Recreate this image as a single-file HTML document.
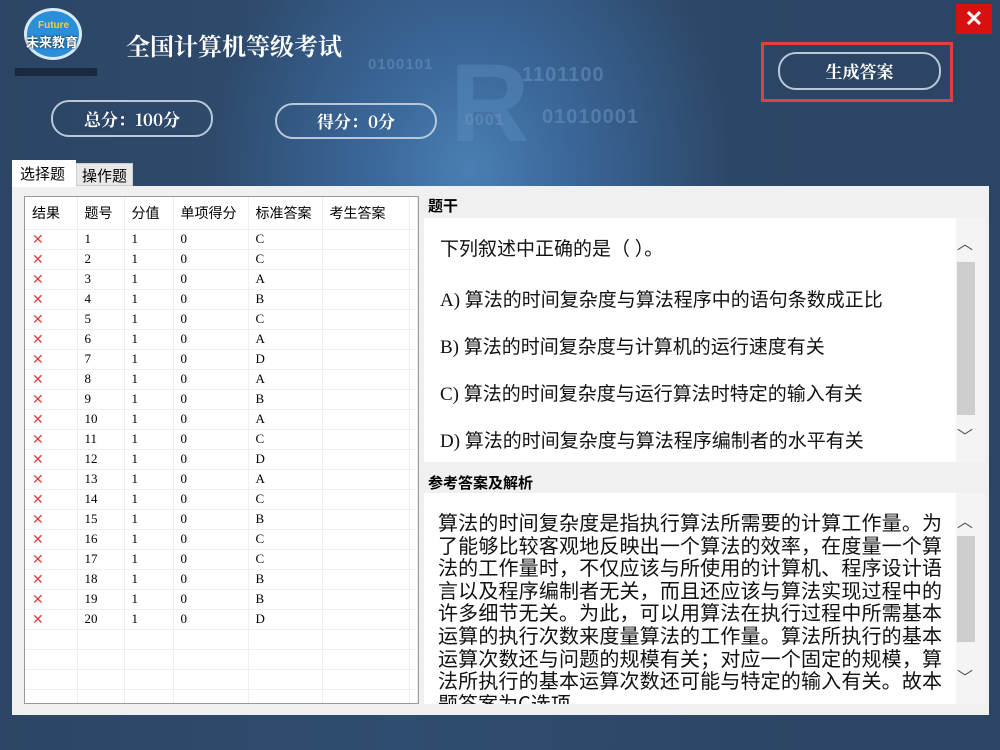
<!DOCTYPE html>
<html><head><meta charset="utf-8"><style>
*{margin:0;padding:0;box-sizing:border-box}
body{width:1000px;height:750px;overflow:hidden;position:relative;font-family:"Liberation Sans","Noto Sans CJK SC","WenQuanYi Zen Hei",sans-serif;
background:radial-gradient(ellipse 260px 300px at 470px 170px,#4a7fb4 0%,#3a6698 40%,rgba(44,69,100,0) 100%),linear-gradient(90deg,#2c4564 0%,#2f4d70 40%,#2c4564 80%);background-color:#2c4564}
.abs{position:absolute}
.pill{position:absolute;border:2px solid #b8c8da;border-radius:18px;color:#fff;font-weight:bold;font-size:17px;text-align:center;font-family:"Noto Serif CJK SC","Liberation Serif",serif}
.bin{position:absolute;color:#6b93bf;font-size:20px;font-weight:bold;opacity:.55;letter-spacing:1px}
table{border-collapse:collapse;font-size:13px}
td{height:20px;border-right:1px solid #eee;border-bottom:1px solid #eee;padding-left:7px;font-family:"Liberation Serif","Noto Serif CJK SC",serif;color:#000}
th{height:32px;font-weight:normal;text-align:left;padding-left:7px;font-size:14px;border-right:1px solid #eee;border-bottom:1px solid #eee}
.x{color:#e04040;font-family:"Liberation Sans",sans-serif;font-size:14px}
.box{position:absolute;background:#fff}
.sb{position:absolute;background:#f0f0f0}
.lbl{position:absolute;font-weight:bold;font-size:15px;color:#000}
.q{position:absolute;left:440px;font-size:19px;color:#111;font-family:"Liberation Serif","Noto Sans CJK SC",sans-serif}
</style></head><body>
<div class="bin" style="left:368px;top:56px;font-size:15px">0100101</div>
<div class="abs" style="left:450px;top:40px;font-size:110px;font-weight:bold;color:#5a8cc0;opacity:.45;font-family:'Liberation Sans'">R</div>
<div class="bin" style="left:522px;top:64px">1101100</div>
<div class="bin" style="left:542px;top:106px">01010001</div>
<div class="bin" style="left:465px;top:112px;font-size:16px">0001</div>
<!-- logo -->
<div class="abs" style="left:24px;top:8px;width:58px;height:52px;border-radius:50%;background:#2b8ed8;border:3px solid #d8e8f5"></div>
<div class="abs" style="left:38px;top:20px;font-size:10px;color:#f0d040;font-weight:bold">Future</div>
<div class="abs" style="left:26px;top:32px;font-size:13px;color:#fff;font-weight:bold;text-shadow:0 0 2px #000">未来教育</div>
<div class="abs" style="left:15px;top:68px;width:82px;height:8px;background:#1a2a3e"></div>
<div class="abs" style="left:126px;top:27px;font-size:24px;color:#fff;font-weight:bold;font-family:'Noto Serif CJK SC',serif">全国计算机等级考试</div>
<div class="pill" style="left:51px;top:100px;width:162px;height:37px;line-height:33px">总分：100分</div>
<div class="pill" style="left:275px;top:103px;width:162px;height:36px;line-height:32px">得分：0分</div>
<div class="abs" style="left:761px;top:42px;width:192px;height:60px;border:3px solid #e04040"></div>
<div class="pill" style="left:778px;top:52px;width:163px;height:38px;line-height:34px">生成答案</div>
<div class="abs" style="left:956px;top:4px;width:36px;height:30px;background:#d81010;color:#fff;font-size:22px;text-align:center;line-height:30px;font-weight:bold">✕</div>
<!-- panel -->
<div class="abs" style="left:12px;top:186px;width:977px;height:529px;background:#f0f0f0"></div>
<div class="abs" style="left:12px;top:160px;width:64px;height:27px;background:#fff;font-size:15px;padding:3px 0 0 8px">选择题</div>
<div class="abs" style="left:76px;top:163px;width:57px;height:23px;background:#e8e8e8;border:1px solid #ccc;font-size:15px;padding:1px 0 0 5px">操作题</div>
<div class="abs" style="left:24px;top:196px;width:395px;height:508px;background:#fff;border:1px solid #999;overflow:hidden">
<table>
<tr><th style="width:52px">结果</th><th style="width:47px">题号</th><th style="width:49px">分值</th><th style="width:75px">单项得分</th><th style="width:74px">标准答案</th><th style="width:87px">考生答案</th><th></th></tr>
<tr><td class="x">✕</td><td>1</td><td>1</td><td>0</td><td>C</td><td></td><td></td></tr>
<tr><td class="x">✕</td><td>2</td><td>1</td><td>0</td><td>C</td><td></td><td></td></tr>
<tr><td class="x">✕</td><td>3</td><td>1</td><td>0</td><td>A</td><td></td><td></td></tr>
<tr><td class="x">✕</td><td>4</td><td>1</td><td>0</td><td>B</td><td></td><td></td></tr>
<tr><td class="x">✕</td><td>5</td><td>1</td><td>0</td><td>C</td><td></td><td></td></tr>
<tr><td class="x">✕</td><td>6</td><td>1</td><td>0</td><td>A</td><td></td><td></td></tr>
<tr><td class="x">✕</td><td>7</td><td>1</td><td>0</td><td>D</td><td></td><td></td></tr>
<tr><td class="x">✕</td><td>8</td><td>1</td><td>0</td><td>A</td><td></td><td></td></tr>
<tr><td class="x">✕</td><td>9</td><td>1</td><td>0</td><td>B</td><td></td><td></td></tr>
<tr><td class="x">✕</td><td>10</td><td>1</td><td>0</td><td>A</td><td></td><td></td></tr>
<tr><td class="x">✕</td><td>11</td><td>1</td><td>0</td><td>C</td><td></td><td></td></tr>
<tr><td class="x">✕</td><td>12</td><td>1</td><td>0</td><td>D</td><td></td><td></td></tr>
<tr><td class="x">✕</td><td>13</td><td>1</td><td>0</td><td>A</td><td></td><td></td></tr>
<tr><td class="x">✕</td><td>14</td><td>1</td><td>0</td><td>C</td><td></td><td></td></tr>
<tr><td class="x">✕</td><td>15</td><td>1</td><td>0</td><td>B</td><td></td><td></td></tr>
<tr><td class="x">✕</td><td>16</td><td>1</td><td>0</td><td>C</td><td></td><td></td></tr>
<tr><td class="x">✕</td><td>17</td><td>1</td><td>0</td><td>C</td><td></td><td></td></tr>
<tr><td class="x">✕</td><td>18</td><td>1</td><td>0</td><td>B</td><td></td><td></td></tr>
<tr><td class="x">✕</td><td>19</td><td>1</td><td>0</td><td>B</td><td></td><td></td></tr>
<tr><td class="x">✕</td><td>20</td><td>1</td><td>0</td><td>D</td><td></td><td></td></tr>
<tr><td></td><td></td><td></td><td></td><td></td><td></td><td></td></tr>
<tr><td></td><td></td><td></td><td></td><td></td><td></td><td></td></tr>
<tr><td></td><td></td><td></td><td></td><td></td><td></td><td></td></tr>
<tr><td></td><td></td><td></td><td></td><td></td><td></td><td></td></tr>
</table></div>
<div class="lbl" style="left:428px;top:195px">题干</div>
<div class="box" style="left:424px;top:218px;width:532px;height:244px"></div>
<div class="sb" style="left:956px;top:218px;width:29px;height:244px;background:#f4f4f4"></div>
<div class="abs" style="left:957px;top:262px;width:18px;height:153px;background:#cdcdcd"></div>
<div class="abs" style="left:957px;top:230px;font-size:16px;color:#555">︿</div>
<div class="abs" style="left:957px;top:423px;font-size:16px;color:#555">﹀</div>
<div class="q" style="top:234px">下列叙述中正确的是（ ）。</div>
<div class="q" style="top:285px">A) 算法的时间复杂度与算法程序中的语句条数成正比</div>
<div class="q" style="top:332px">B) 算法的时间复杂度与计算机的运行速度有关</div>
<div class="q" style="top:379px">C) 算法的时间复杂度与运行算法时特定的输入有关</div>
<div class="q" style="top:426px">D) 算法的时间复杂度与算法程序编制者的水平有关</div>
<div class="lbl" style="left:428px;top:472px">参考答案及解析</div>
<div class="box" style="left:424px;top:493px;width:532px;height:211px;overflow:hidden">
<div style="position:absolute;left:14px;top:18px;width:504px;font-size:20px;line-height:22.6px;color:#111;text-align:justify;font-family:'WenQuanYi Zen Hei','Noto Sans CJK SC',sans-serif">算法的时间复杂度是指执行算法所需要的计算工作量。为了能够比较客观地反映出一个算法的效率，在度量一个算法的工作量时，不仅应该与所使用的计算机、程序设计语言以及程序编制者无关，而且还应该与算法实现过程中的许多细节无关。为此，可以用算法在执行过程中所需基本运算的执行次数来度量算法的工作量。算法所执行的基本运算次数还与问题的规模有关；对应一个固定的规模，算法所执行的基本运算次数还可能与特定的输入有关。故本题答案为C选项。</div></div>
<div class="sb" style="left:956px;top:493px;width:29px;height:211px;background:#f4f4f4"></div>
<div class="abs" style="left:957px;top:536px;width:18px;height:106px;background:#cdcdcd"></div>
<div class="abs" style="left:957px;top:508px;font-size:16px;color:#555">︿</div>
<div class="abs" style="left:957px;top:664px;font-size:16px;color:#555">﹀</div>
</body></html>
